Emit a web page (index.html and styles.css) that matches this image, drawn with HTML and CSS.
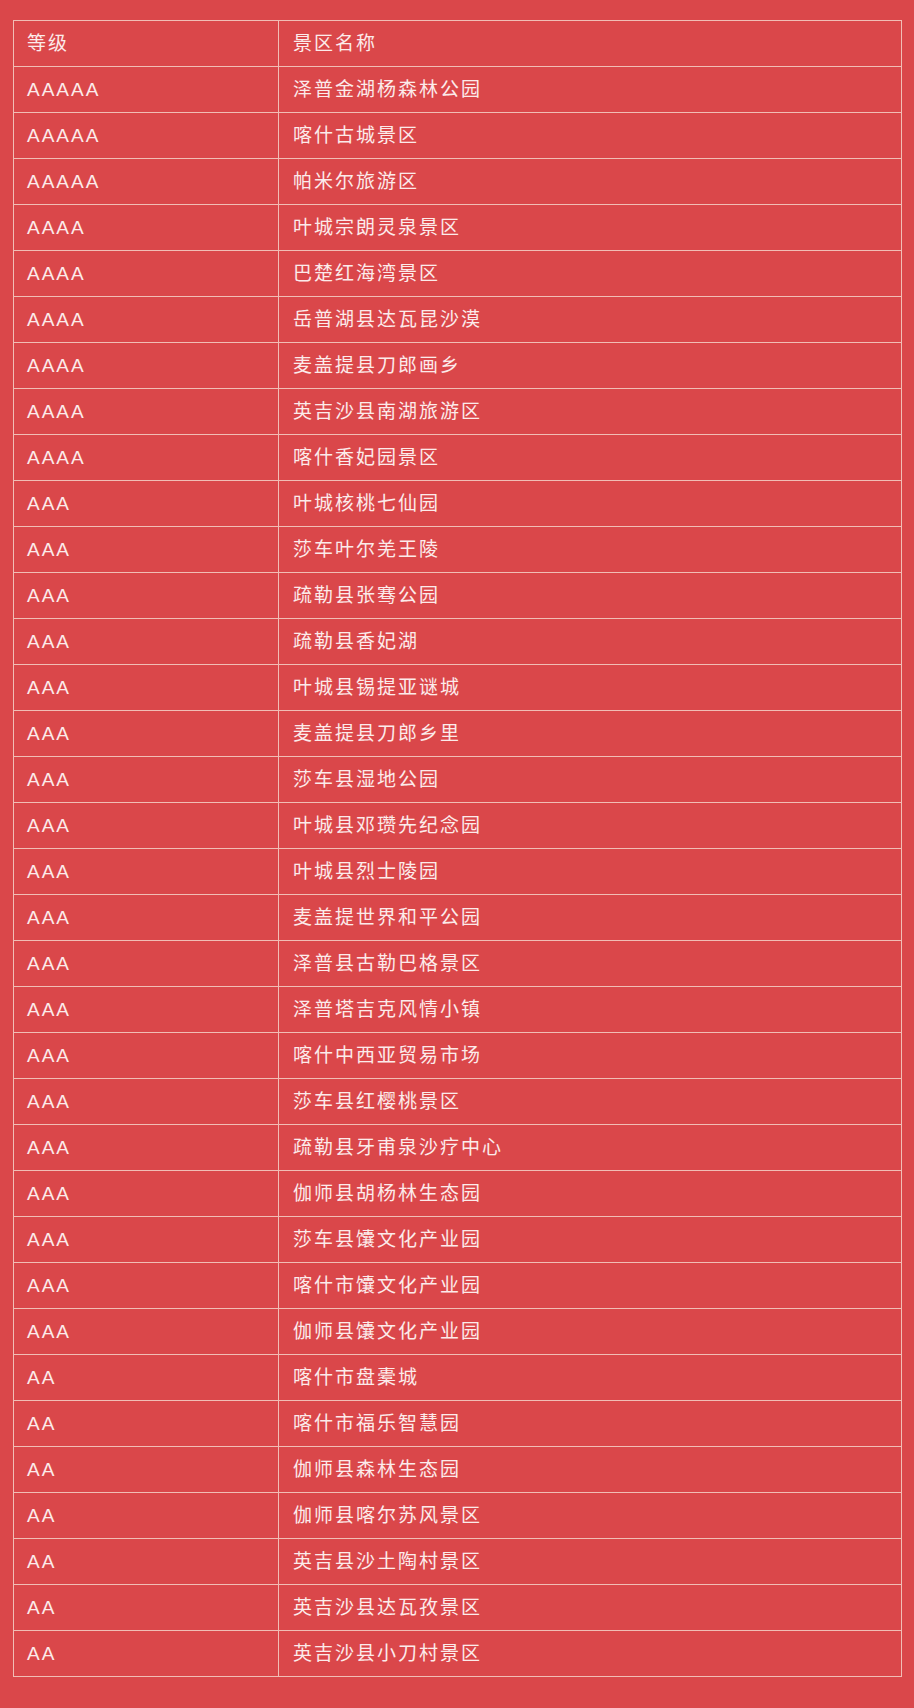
FILE: index.html
```html
<!DOCTYPE html>
<html lang="zh-CN">
<head>
<meta charset="utf-8">
<title>景区名录</title>
<link rel="stylesheet" href="styles.css">
</head>
<body>
<table class="list">
<tr><td class="grade">等级</td><td class="name">景区名称</td></tr>
<tr><td class="grade">AAAAA</td><td class="name">泽普金湖杨森林公园</td></tr>
<tr><td class="grade">AAAAA</td><td class="name">喀什古城景区</td></tr>
<tr><td class="grade">AAAAA</td><td class="name">帕米尔旅游区</td></tr>
<tr><td class="grade">AAAA</td><td class="name">叶城宗朗灵泉景区</td></tr>
<tr><td class="grade">AAAA</td><td class="name">巴楚红海湾景区</td></tr>
<tr><td class="grade">AAAA</td><td class="name">岳普湖县达瓦昆沙漠</td></tr>
<tr><td class="grade">AAAA</td><td class="name">麦盖提县刀郎画乡</td></tr>
<tr><td class="grade">AAAA</td><td class="name">英吉沙县南湖旅游区</td></tr>
<tr><td class="grade">AAAA</td><td class="name">喀什香妃园景区</td></tr>
<tr><td class="grade">AAA</td><td class="name">叶城核桃七仙园</td></tr>
<tr><td class="grade">AAA</td><td class="name">莎车叶尔羌王陵</td></tr>
<tr><td class="grade">AAA</td><td class="name">疏勒县张骞公园</td></tr>
<tr><td class="grade">AAA</td><td class="name">疏勒县香妃湖</td></tr>
<tr><td class="grade">AAA</td><td class="name">叶城县锡提亚谜城</td></tr>
<tr><td class="grade">AAA</td><td class="name">麦盖提县刀郎乡里</td></tr>
<tr><td class="grade">AAA</td><td class="name">莎车县湿地公园</td></tr>
<tr><td class="grade">AAA</td><td class="name">叶城县邓瓒先纪念园</td></tr>
<tr><td class="grade">AAA</td><td class="name">叶城县烈士陵园</td></tr>
<tr><td class="grade">AAA</td><td class="name">麦盖提世界和平公园</td></tr>
<tr><td class="grade">AAA</td><td class="name">泽普县古勒巴格景区</td></tr>
<tr><td class="grade">AAA</td><td class="name">泽普塔吉克风情小镇</td></tr>
<tr><td class="grade">AAA</td><td class="name">喀什中西亚贸易市场</td></tr>
<tr><td class="grade">AAA</td><td class="name">莎车县红樱桃景区</td></tr>
<tr><td class="grade">AAA</td><td class="name">疏勒县牙甫泉沙疗中心</td></tr>
<tr><td class="grade">AAA</td><td class="name">伽师县胡杨林生态园</td></tr>
<tr><td class="grade">AAA</td><td class="name">莎车县馕文化产业园</td></tr>
<tr><td class="grade">AAA</td><td class="name">喀什市馕文化产业园</td></tr>
<tr><td class="grade">AAA</td><td class="name">伽师县馕文化产业园</td></tr>
<tr><td class="grade">AA</td><td class="name">喀什市盘橐城</td></tr>
<tr><td class="grade">AA</td><td class="name">喀什市福乐智慧园</td></tr>
<tr><td class="grade">AA</td><td class="name">伽师县森林生态园</td></tr>
<tr><td class="grade">AA</td><td class="name">伽师县喀尔苏风景区</td></tr>
<tr><td class="grade">AA</td><td class="name">英吉县沙土陶村景区</td></tr>
<tr><td class="grade">AA</td><td class="name">英吉沙县达瓦孜景区</td></tr>
<tr><td class="grade">AA</td><td class="name">英吉沙县小刀村景区</td></tr>
</table>
</body>
</html>
```

FILE: styles.css
```css
html, body {
  margin: 0;
  background: #da474a;
}
body {
  padding: 20px 13px 32px 13px;
  font-family: "Liberation Sans", "Noto Sans CJK SC", sans-serif;
  color: #fcebea;
}
.list {
  border-collapse: collapse;
  width: 889px;
  table-layout: fixed;
}
.list td {
  border: 1px solid #f1bdb5;
  height: 45px;
  padding: 0;
  font-size: 19px;
  letter-spacing: 2px;
  line-height: 45px;
  vertical-align: middle;
  box-sizing: border-box;
}
.list .grade {
  width: 265px;
  padding-left: 13px;
}
.list .name {
  padding-left: 14px;
}
```
